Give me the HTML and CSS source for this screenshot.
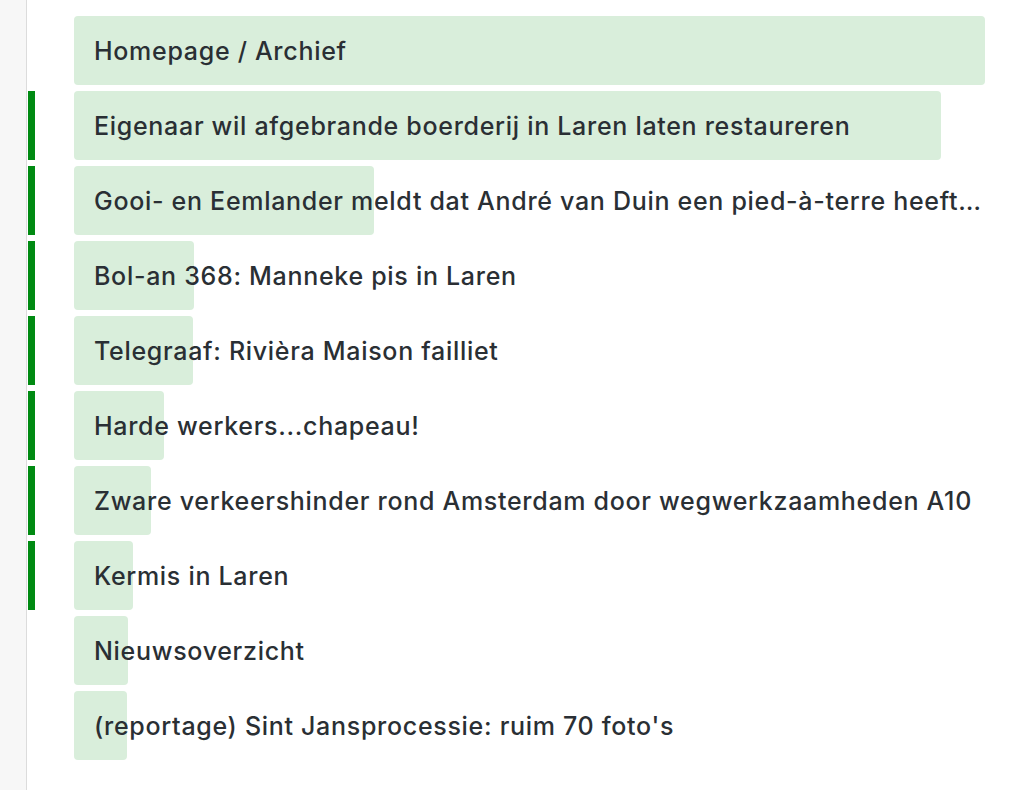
FILE: index.html
```html
<!DOCTYPE html>
<html lang="nl">
<head>
<meta charset="utf-8">
<title>Nieuws</title>
<link rel="stylesheet" href="styles.css">
</head>
<body>
<div class="page">
  <div class="rail"></div>
  <ul class="list">
    <li class="item">
      <span class="mark"></span>
      <div class="bar"><span class="fill" style="width:100%"></span><span class="label">Homepage / Archief</span></div>
    </li>
    <li class="item">
      <span class="mark on"></span>
      <div class="bar"><span class="fill" style="width:95.2%"></span><span class="label">Eigenaar wil afgebrande boerderij in Laren laten restaureren</span></div>
    </li>
    <li class="item">
      <span class="mark on"></span>
      <div class="bar"><span class="fill" style="width:32.9%"></span><span class="label">Gooi- en Eemlander meldt dat André van Duin een pied-à-terre heeft gekocht in Laren</span></div>
    </li>
    <li class="item">
      <span class="mark on"></span>
      <div class="bar"><span class="fill" style="width:13.2%"></span><span class="label">Bol-an 368: Manneke pis in Laren</span></div>
    </li>
    <li class="item">
      <span class="mark on"></span>
      <div class="bar"><span class="fill" style="width:13.05%"></span><span class="label">Telegraaf: Rivièra Maison failliet</span></div>
    </li>
    <li class="item">
      <span class="mark on"></span>
      <div class="bar"><span class="fill" style="width:9.9%"></span><span class="label">Harde werkers...chapeau!</span></div>
    </li>
    <li class="item">
      <span class="mark on"></span>
      <div class="bar"><span class="fill" style="width:8.45%"></span><span class="label">Zware verkeershinder rond Amsterdam door wegwerkzaamheden A10</span></div>
    </li>
    <li class="item">
      <span class="mark on"></span>
      <div class="bar"><span class="fill" style="width:6.5%"></span><span class="label">Kermis in Laren</span></div>
    </li>
    <li class="item">
      <span class="mark"></span>
      <div class="bar"><span class="fill" style="width:5.9%"></span><span class="label">Nieuwsoverzicht</span></div>
    </li>
    <li class="item">
      <span class="mark"></span>
      <div class="bar"><span class="fill" style="width:5.8%"></span><span class="label">(reportage) Sint Jansprocessie: ruim 70 foto's</span></div>
    </li>
  </ul>
</div>
</body>
</html>
```
FILE: styles.css
```css
html, body {
  margin: 0;
  padding: 0;
  background: #ffffff;
}
body {
  font-family: Inter, "Noto Sans", "Liberation Sans", sans-serif;
  color: #2a2f34;
}
.page {
  display: flex;
  min-height: 790px;
}
.rail {
  width: 26px;
  flex: none;
  background: #f7f7f7;
  border-right: 1px solid #dcdcdc;
}
.list {
  list-style: none;
  margin: 0;
  padding: 16px 39px 0 1px;
  flex: 1;
  min-width: 0;
  display: flex;
  flex-direction: column;
  gap: 6px;
}
.item {
  display: flex;
  height: 69px;
}
.mark {
  width: 7px;
  flex: none;
  margin-right: 39px;
}
.mark.on {
  background: #008a12;
}
.bar {
  position: relative;
  flex: 1;
  min-width: 0;
}
.fill {
  position: absolute;
  left: 0;
  top: 0;
  bottom: 0;
  background: #d9eedb;
  border-radius: 4px;
}
.label {
  position: relative;
  display: block;
  padding-left: 20px;
  line-height: 70px;
  font-size: 25px;
  font-weight: 500;
  letter-spacing: 0.7px;
  white-space: nowrap;
  overflow: hidden;
  text-overflow: ellipsis;
}
```
